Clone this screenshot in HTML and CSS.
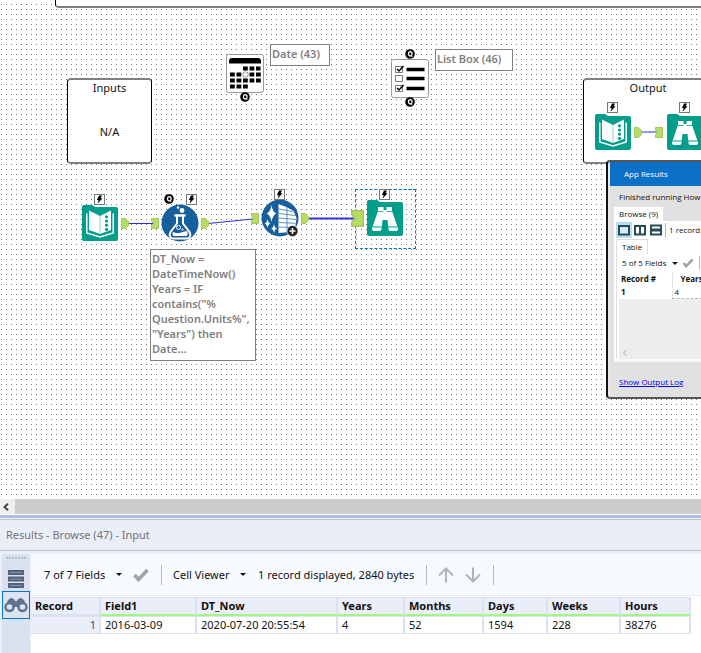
FILE: index.html
```html
<!DOCTYPE html>
<html lang="en">
<head>
    <meta charset="UTF-8">
    <meta name="viewport" content="width=device-width,initial-scale=1">
    <title>Workflow</title>
    <link rel="stylesheet" href="styles.css">
</head>
<body>
    <svg class="sprite" aria-hidden="true">
        <symbol id="bolt" viewBox="0 0 11 11">
            <rect x=".5" y=".5" width="10" height="10" fill="#fff" stroke="#777"/>
            <path d="M5 1.5h3L6.6 4.2H8.6L3.4 9.8l1.3-3.9H2.9z" fill="#000"/>
        </symbol>
        <symbol id="question" viewBox="0 0 10 10">
            <circle cx="5" cy="5" r="4.8" fill="#000"/>
            <ellipse cx="5.3" cy="4.8" rx="1.8" ry="2.2" fill="none" stroke="#fff" stroke-width="1.2"/>
            <path d="M5.6 6.2l1.8 1.8" stroke="#fff"/>
        </symbol>
        <symbol id="out" viewBox="0 0 8 11">
            <path d="M.5.5h4l3 3v4l-3 3h-4z" fill="#b5dc64" stroke="#a3c95a"/>
        </symbol>
        <symbol id="in" viewBox="0 0 8 11" preserveAspectRatio="none">
            <path d="M.5.5h7v10h-7V8l2-2.5L.5 3z" fill="#b5dc64" stroke="#a3c95a"/>
        </symbol>
        <symbol id="book" viewBox="0 0 36 36">
            <path d="M2 0h8l3 2h21q2 0 2 2v30q0 2-2 2H2q-2 0-2-2V2q0-2 2-2z" fill="#029d8b"/>
            <path d="M7 5.500L18 11V29L7 25z" fill="#fff"/>
            <path d="M29 5.500L18 11V29L29 25z" fill="#fff"/>
            <path d="M4.800 8.500V28L18 32l13.200-4V8.500" fill="none" stroke="#fff" stroke-width="1.500"/>
            <path d="M18 11v18" stroke="#7fccc3" stroke-width=".8"/>
            <g fill="#029d8b">
                <circle cx="24.500" cy="11.800" r="1.600"/>
                <circle cx="24.500" cy="16" r="1.600"/>
                <circle cx="24.500" cy="20.200" r="1.600"/>
                <circle cx="24.500" cy="24.400" r="1.600"/>
            </g>
        </symbol>
        <symbol id="binoculars" viewBox="0 0 36 36">
            <path d="M2 0h8l3 2h21q2 0 2 2v30q0 2-2 2H2q-2 0-2-2V2q0-2 2-2z" fill="#029d8b"/>
            <path d="M11 7h5.500v3h3V7H25v4l4.500 13 1.500 5q0 2-2 2h-5.500q-2 0-2-2l-1-9h-5l-1 9q0 2-2 2H7q-2 0-2-2l1.500-5L11 11z" fill="#fff"/>
            <path d="M10.500 11.500h6M19.500 11.500h6" stroke="#029d8b" stroke-width=".8"/>
            <path d="M6 27h9M21 27h9" stroke="#029d8b"/>
        </symbol>
        <symbol id="flask" viewBox="0 0 38 38">
            <circle cx="19" cy="19" r="18.500" fill="#175f9c"/>
            <path d="M14.500 11.500h9" stroke="#fff" stroke-width="2.600" stroke-linecap="round"/>
            <path d="M16 12v7.500L9.500 28q-2.500 6 3 6.500h13q5.500-.5 3-6.500L22 19.500V12" fill="none" stroke="#fff" stroke-width="2"/>
            <path d="M12 28q4 2 8 .5t6-1.500q2 5-1.500 5h-11Q10.500 32 12 28z" fill="#fff"/>
            <circle cx="17.500" cy="23.500" r="2" fill="none" stroke="#fff"/>
            <circle cx="21.500" cy="25.500" r="1" fill="#fff"/>
            <circle cx="21" cy="6.500" r="2.400" fill="#fff"/>
            <circle cx="17" cy="3.500" r="1.300" fill="#fff"/>
        </symbol>
        <symbol id="recipe" viewBox="0 0 38 38">
            <circle cx="19" cy="19" r="18.500" fill="#175f9c"/>
            <path d="M17.500 5l8 3 7 4 3 7-1 8-5 6-12 1z" fill="#fff"/>
            <path d="M17.500 10l14 2.500M17.500 14.500l17 2M17.500 19l18 1.500M17.500 23.500l17 .8M17.500 28l15 .5M26 8v26" stroke="#4a83b3" stroke-width=".9" fill="none"/>
            <path d="M10.500 6q1 7 5 8.500-4 1.500-5 8.500-1-7-5-8.500 4-1.500 5-8.500zM6.500 20q.6 4 3 4.500-2.400.5-3 4.500-.6-4-3-4.500 2.400-.5 3-4.500zM13 25q.6 4 3 4.500-2.400.5-3 4.500-.6-4-3-4.500 2.400-.5 3-4.500z" fill="#fff"/>
            <circle cx="31.500" cy="32" r="5.500" fill="#222" stroke="#fff" stroke-width=".6"/>
            <path d="M31.500 29v6M28.500 32h6" stroke="#fff" stroke-width="1.600"/>
        </symbol>
        <symbol id="calendar" viewBox="0 0 38 39">
            <rect x=".5" y=".5" width="37" height="38" rx="2" fill="#fff" stroke="#999"/>
            <path d="M3 9.500V7q0-3 3-3h26q3 0 3 3v2.500z" fill="#000"/>
            <path d="M17 14.500h17.500" stroke="#000" stroke-width="4" stroke-dasharray="4.800 1.700"/>
            <path d="M4 20.500h31M4 26.500h31" stroke="#000" stroke-width="4" stroke-dasharray="4.800 1.700"/>
            <path d="M4 32.500h18" stroke="#000" stroke-width="4" stroke-dasharray="4.800 1.700"/>
            <circle cx="19.500" cy="20.500" r="2.700" fill="#fff" stroke="#999"/>
        </symbol>
        <symbol id="listbox" viewBox="0 0 38 39">
            <rect x=".5" y=".5" width="37" height="38" rx="2" fill="#fff" stroke="#999"/>
            <path d="M15.500 10.500h18M15.500 19.500h18M15.500 29.500h18" stroke="#000" stroke-width="3.400"/>
            <path d="M4.500 7.500h7v6h-7zM4.500 16.500h7v6h-7zM4.500 26.500h7v6h-7z" fill="#fff" stroke="#777"/>
            <path d="M6 10l2 2 4.500-5M6 29l2 2 4.500-5" fill="none" stroke="#000" stroke-width="1.500"/>
        </symbol>
        <symbol id="check" viewBox="0 0 16 14">
            <path d="M1.500 7l4 4.500L14.500 2" fill="none" stroke="#a3a3a3" stroke-width="3.600"/>
        </symbol>
    </svg>

    <main class="app">
        <section class="canvas">
            <div class="group group-top"></div>
            <div class="group group-inputs">
                <h2>Inputs</h2>
                <p>N/A</p>
            </div>
            <div class="group group-output">
                <h2>Output</h2>
            </div>

            <svg class="links" aria-hidden="true">
                <path d="M128 223.500L154 223.500M208 223.500L253 219M641 132L659 132"/>
                <path class="active" d="M309 218.500H354"/>
            </svg>

            <div class="selection"></div>

            <svg class="node interface" style="left:226px;top:54px"><use href="#calendar"/></svg>
            <svg class="node question" style="left:240px;top:92px"><use href="#question"/></svg>
            <div class="note" style="left:270px;top:44px;width:60px">Date (43)</div>

            <svg class="node interface" style="left:391px;top:59px"><use href="#listbox"/></svg>
            <svg class="node question" style="left:405px;top:49px"><use href="#question"/></svg>
            <svg class="node question" style="left:405px;top:97px"><use href="#question"/></svg>
            <div class="note" style="left:435px;top:49px;width:78px">List Box (46)</div>

            <svg class="node tool" style="left:82px;top:205px"><use href="#book"/></svg>
            <svg class="node bolt" style="left:94px;top:194px"><use href="#bolt"/></svg>
            <svg class="node anchor" style="left:121px;top:218px"><use href="#out"/></svg>

            <svg class="node anchor" style="left:151px;top:218px"><use href="#in"/></svg>
            <svg class="node round" style="left:161px;top:204px"><use href="#flask"/></svg>
            <svg class="node question" style="left:164px;top:194px"><use href="#question"/></svg>
            <svg class="node bolt" style="left:186px;top:194px"><use href="#bolt"/></svg>
            <svg class="node anchor" style="left:201px;top:218px"><use href="#out"/></svg>
            <div class="note" style="left:150px;top:249px;width:106px">DT_Now = DateTimeNow()<br>Years = IF contains("%<br>Question.Units%",<br>"Years") then Date...</div>

            <svg class="node anchor" style="left:251px;top:213px"><use href="#in"/></svg>
            <svg class="node round" style="left:261px;top:199px"><use href="#recipe"/></svg>
            <svg class="node bolt" style="left:274px;top:189px"><use href="#bolt"/></svg>
            <svg class="node anchor" style="left:301px;top:213px"><use href="#out"/></svg>

            <svg class="node anchor-large" style="left:351px;top:210px"><use href="#in"/></svg>
            <svg class="node tool" style="left:367px;top:200px"><use href="#binoculars"/></svg>
            <svg class="node bolt" style="left:379px;top:189px"><use href="#bolt"/></svg>

            <svg class="node tool" style="left:595px;top:114px"><use href="#book"/></svg>
            <svg class="node bolt" style="left:607px;top:102px"><use href="#bolt"/></svg>
            <svg class="node anchor" style="left:634px;top:127px"><use href="#out"/></svg>
            <svg class="node anchor" style="left:655px;top:127px"><use href="#in"/></svg>
            <svg class="node tool" style="left:667px;top:114px"><use href="#binoculars"/></svg>
            <svg class="node bolt" style="left:679px;top:102px"><use href="#bolt"/></svg>

            <div class="popup">
                <div class="popup-window">
                    <h3 class="popup-title">App Results</h3>
                    <p class="popup-status">Finished running How</p>
                    <button class="popup-tab" type="button">Browse (9)</button>
                    <div class="popup-panel">
                        <div class="popup-views">
                            <button class="view-btn selected" type="button" aria-label="Single pane">
                                <svg viewBox="0 0 12 12"><path d="M1 2h10v8.500H1z"/></svg>
                            </button>
                            <button class="view-btn" type="button" aria-label="Side by side">
                                <svg viewBox="0 0 12 12"><path d="M1 2h10v8.500H1zM6 2v8"/></svg>
                            </button>
                            <button class="view-btn" type="button" aria-label="Stacked">
                                <svg viewBox="0 0 12 12"><path d="M1 1.500h10v4H1zM1 6.500h10v4H1z"/></svg>
                            </button>
                            <span class="divider"></span>
                            <span>1 record</span>
                        </div>
                        <button class="popup-tab table-tab" type="button">Table</button>
                        <div class="popup-body">
                            <div class="popup-fields">
                                <label class="dropdown">
                                    <select aria-label="Popup fields"><option>5 of 5 Fields</option></select>
                                </label>
                                <svg class="check"><use href="#check"/></svg>
                                <span class="divider"></span>
                            </div>
                            <table class="popup-table">
                                <tr><th>Record #</th><th>Years</th></tr>
                                <tr><td>1</td><td>4</td></tr>
                            </table>
                            <div class="popup-empty">
                                <svg viewBox="0 0 6 8"><path d="M4.500 1L1.500 4l3 3"/></svg>
                            </div>
                        </div>
                    </div>
                    <a class="popup-log" href="#log">Show Output Log</a>
                </div>
            </div>
        </section>

        <div class="scrollbar">
            <button type="button" aria-label="Scroll left">
                <svg viewBox="0 0 8 8"><path d="M6 .8L2.500 4 6 7.200"/></svg>
            </button>
            <div class="thumb"></div>
        </div>

        <section class="results">
            <h2 class="results-title">Results - Browse (47) - Input</h2>
            <div class="results-content">
                <nav class="side">
                    <div class="grip"></div>
                    <button class="side-btn" type="button" aria-label="Messages">
                        <svg viewBox="0 0 18 20"><path d="M2 2h14v3H2zM2 8.500h14v3H2zM2 15h14v3H2z" fill="#8a94ad" stroke="#53607e" stroke-width="2"/></svg>
                    </button>
                    <button class="side-btn selected" type="button" aria-label="Browse">
                        <svg viewBox="0 0 24 16">
                            <path d="M4 3l3-2 3 1 1 2h2l1-2 3-1 3 2 3 7H1z" fill="#62718f"/>
                            <circle cx="5.500" cy="10" r="4" fill="#dce5f3" stroke="#62718f" stroke-width="2.400"/>
                            <circle cx="18.500" cy="10" r="4" fill="#dce5f3" stroke="#62718f" stroke-width="2.400"/>
                        </svg>
                    </button>
                </nav>
                <div class="data">
                    <div class="toolbar">
                        <label class="dropdown">
                            <select aria-label="Fields"><option>7 of 7 Fields</option></select>
                        </label>
                        <svg class="check"><use href="#check"/></svg>
                        <span class="divider"></span>
                        <label class="dropdown">
                            <select aria-label="Viewer"><option>Cell Viewer</option></select>
                        </label>
                        <span class="count">1 record displayed, 2840 bytes</span>
                        <span class="divider"></span>
                        <button class="arrow-btn" type="button" aria-label="Previous">
                            <svg viewBox="0 0 16 16"><path d="M8 15.500V2M1 8.500l7-7 7 7"/></svg>
                        </button>
                        <button class="arrow-btn" type="button" aria-label="Next">
                            <svg viewBox="0 0 16 16"><path d="M8 .5V14M1 7.500l7 7 7-7"/></svg>
                        </button>
                        <span class="divider"></span>
                    </div>
                    <table class="grid">
                        <colgroup>
                            <col style="width:70px"><col style="width:96px"><col style="width:141px"><col style="width:67px">
                            <col style="width:79px"><col style="width:64px"><col style="width:73px"><col style="width:70px">
                        </colgroup>
                        <thead>
                            <tr>
                                <th>Record</th><th>Field1</th><th>DT_Now</th><th>Years</th>
                                <th>Months</th><th>Days</th><th>Weeks</th><th>Hours</th>
                            </tr>
                        </thead>
                        <tbody>
                            <tr>
                                <td>1</td><td>2016-03-09</td><td>2020-07-20 20:55:54</td><td>4</td>
                                <td>52</td><td>1594</td><td>228</td><td>38276</td>
                            </tr>
                        </tbody>
                    </table>
                </div>
            </div>
        </section>
    </main>
</body>
</html>
```
FILE: styles.css
```css
* {
    margin: 0;
    padding: 0;
    box-sizing: border-box;
}

body {
    font-family: 'Noto Sans', 'Open Sans', sans-serif;
    font-size: 11px;
    line-height: 15px;
    color: #111;
    background-color: #fff;
}

button,
select {
    font: inherit;
    color: inherit;
    background: none;
    border: none;
}

svg {
    display: block;
}

.sprite {
    position: absolute;
    width: 0;
    height: 0;
}

.app {
    display: flex;
    flex-direction: column;
    height: 100vh;
    overflow: hidden;
}

/* Canvas */
.canvas {
    position: relative;
    flex: 1;
    min-height: 0;
    overflow: hidden;
    background-color: #fff;
    background-image:
        linear-gradient(90deg, #fff 4px, transparent 4px),
        linear-gradient(#fff 4px, #777 4px);
    background-size: 5px 5px;
    background-position: 2px 0;
}

.group {
    position: absolute;
    background-color: #fff;
    border: 1px solid #000;
    border-top: 2px solid #808080;
    border-bottom: 2px solid #808080;
    border-radius: 4px;
    text-align: center;
}

.group h2 {
    font-size: 11px;
    font-weight: 400;
}

.group-top {
    left: 55px;
    right: -20px;
    top: -20px;
    height: 28px;
}

.group-inputs {
    left: 67px;
    top: 78px;
    width: 85px;
    height: 86px;
}

.group-inputs p {
    margin-top: 29px;
}

.group-output {
    left: 583px;
    top: 78px;
    width: 130px;
    height: 86px;
}

.links {
    position: absolute;
    width: 100%;
    height: 100%;
    fill: none;
    stroke: #2a2ae8;
}

.links .active {
    stroke: #3232e8;
    stroke-width: 2;
}

.selection {
    position: absolute;
    left: 355px;
    top: 189px;
    width: 61px;
    height: 60px;
    border: 1px dashed #0078d7;
}

.node,
.note {
    position: absolute;
}

.tool {
    width: 36px;
    height: 36px;
}

.round {
    width: 38px;
    height: 38px;
}

.interface {
    width: 38px;
    height: 39px;
}

.bolt {
    width: 11px;
    height: 11px;
}

.question {
    width: 10px;
    height: 10px;
}

.anchor {
    width: 8px;
    height: 11px;
}

.anchor-large {
    width: 13px;
    height: 17px;
}

.note {
    padding: 1px 1px 4px;
    background-color: #fff;
    border: 1px solid #808080;
    color: #808080;
    font-weight: 600;
}

/* App results window */
.popup {
    position: absolute;
    left: 606px;
    top: 160px;
    width: 140px;
    padding-left: 2px;
    background-color: #e8e8e8;
    border: 2px solid #555;
    border-left-color: #111;
    border-radius: 4px;
    font-family: 'Open Sans', sans-serif;
    font-size: 8px;
    line-height: 12px;
}

.popup-window {
    background-color: #e1e1e1;
}

.popup-title {
    padding: 6px 14px;
    background-color: #0a70c8;
    color: #fff;
    font-size: 8px;
    font-weight: 400;
}

.popup-status {
    padding: 5px 9px 4px;
    white-space: nowrap;
}

.popup-tab {
    display: block;
    margin-left: 4px;
    padding: 0 5px;
    background-color: #fff;
    line-height: 14px;
}

.popup-panel {
    margin-left: 4px;
    background-color: #fff;
    border-bottom: 3px solid #f8f8f8;
}

.popup-views {
    display: flex;
    align-items: center;
    height: 18px;
    padding-left: 2px;
}

.view-btn {
    padding: 2px;
}

.view-btn svg {
    width: 12px;
    height: 12px;
    fill: #fff;
    stroke: #294c52;
    stroke-width: 2;
}

.view-btn.selected {
    background-color: #b9dcf8;
}

.view-btn.selected svg {
    fill: #d4e9fb;
}

.popup .divider {
    height: 14px;
    margin: 0 3px 0 1px;
}

.table-tab {
    margin-left: 2px;
    border: 1px solid #ddd;
    border-bottom: none;
}

.popup-body {
    margin-left: 2px;
    padding-left: 2px;
    border-left: 1px solid #ddd;
}

.popup-fields {
    display: flex;
    align-items: center;
    height: 18px;
    padding-left: 3px;
}

.popup .check {
    width: 12px;
    height: 10px;
    margin: 0 4px;
}

.popup-table {
    border-collapse: collapse;
    text-align: left;
    line-height: 13px;
}

.popup-table th:first-child,
.popup-table td:first-child {
    width: 53px;
    padding-left: 2px;
    font-weight: 700;
    border-right: 1px dotted #ccc;
}

.popup-table th + th {
    padding-left: 8px;
}

.popup-table td + td {
    padding-left: 2px;
    border-bottom: 1px dashed #bbb;
}

.popup-empty {
    display: flex;
    align-items: flex-end;
    height: 60px;
    padding: 2px 3px;
    background-color: #ededed;
}

.popup-empty svg {
    width: 6px;
    height: 8px;
    fill: none;
    stroke: #aaa;
}

.popup-log {
    display: block;
    padding: 14px 9px 9px;
    color: #0000ee;
    text-decoration: underline;
}

/* Scrollbar */
.scrollbar {
    display: flex;
    height: 15px;
    background-color: #f0f0f0;
}

.scrollbar button {
    display: flex;
    align-items: center;
    width: 15px;
    padding-left: 2px;
}

.scrollbar svg {
    width: 8px;
    height: 8px;
    fill: none;
    stroke: #444;
    stroke-width: 2;
}

.thumb {
    flex: 1;
    background-color: #cdcdcd;
}

/* Results */
.results {
    margin-top: 1px;
    border-top: 3px solid #b0bfe1;
    background-color: #eaeef9;
}

.results-title {
    margin-top: 1px;
    padding: 7px 6px 8px;
    border-top: 1px solid #c4c4c4;
    border-bottom: 1px solid #c4c4c4;
    color: #737373;
    font-size: 11px;
    font-weight: 400;
}

.results-content {
    display: flex;
    padding: 3px 0 0 2px;
}

.side {
    width: 28px;
    background-color: #dae2f0;
    border-radius: 4px 4px 0 0;
}

.grip {
    height: 3px;
    margin: 3px 4px 7px;
    background-image: linear-gradient(90deg, #b4b9c4 2px, transparent 2px);
    background-size: 3px 2px;
    background-repeat: repeat-x;
}

.side-btn {
    display: flex;
    align-items: center;
    justify-content: center;
    width: 28px;
    height: 24px;
}

.side-btn svg {
    width: 18px;
    height: 20px;
}

.side-btn.selected {
    height: 28px;
    background-color: #dce5f3;
    border: 1px solid #0078d7;
}

.side-btn.selected svg {
    width: 24px;
    height: 16px;
}

.data {
    flex: 1;
    min-width: 0;
    margin-left: 1px;
    padding-bottom: 19px;
    background-color: #fff;
}

.toolbar {
    display: flex;
    align-items: center;
    height: 42px;
    padding-left: 13px;
    background-color: #f7faff;
    border-bottom: 1px solid #eceff5;
    white-space: nowrap;
}

.dropdown {
    display: flex;
    align-items: center;
}

.dropdown::after {
    content: '';
    margin-left: 10px;
    border: 3px solid transparent;
    border-top-color: #111;
    border-bottom: none;
}

.popup .dropdown::after {
    margin-left: 5px;
}

.dropdown select {
    appearance: none;
}

.check {
    width: 16px;
    height: 14px;
    margin: 0 12px 0 11px;
}

.divider {
    width: 1px;
    height: 20px;
    background-color: #b9b9b9;
}

.toolbar .divider + .dropdown {
    margin-left: 11px;
}

.toolbar .dropdown + .count {
    margin-left: 12px;
}

.count {
    margin-right: 12px;
}

.arrow-btn {
    margin-left: 11px;
}

.arrow-btn + .divider {
    margin-left: 12px;
}

.arrow-btn svg {
    width: 16px;
    height: 16px;
    fill: none;
    stroke: #b4b4b4;
    stroke-width: 2;
}

.grid {
    width: 660px;
    margin-top: 1px;
    table-layout: fixed;
    border-collapse: separate;
    border-spacing: 0;
    border-top: 1px solid #dae2f0;
    line-height: 14px;
    text-align: left;
}

.grid th,
.grid td {
    padding: 0 3px 0 4px;
    border-right: 2px solid #dae2f0;
    white-space: nowrap;
}

.grid th {
    height: 18px;
    background-color: #eaeef9;
    border-bottom: 2px solid #a0fa7e;
    font-weight: 700;
}

.grid th:first-child {
    border-bottom-color: #dae2f0;
}

.grid td {
    height: 18px;
    border-top: 1px solid #dae2f0;
    border-bottom: 1px solid #dae2f0;
}

.grid td:first-child {
    background-color: #eaeef9;
    color: #5a3a6a;
    text-align: right;
}
```
